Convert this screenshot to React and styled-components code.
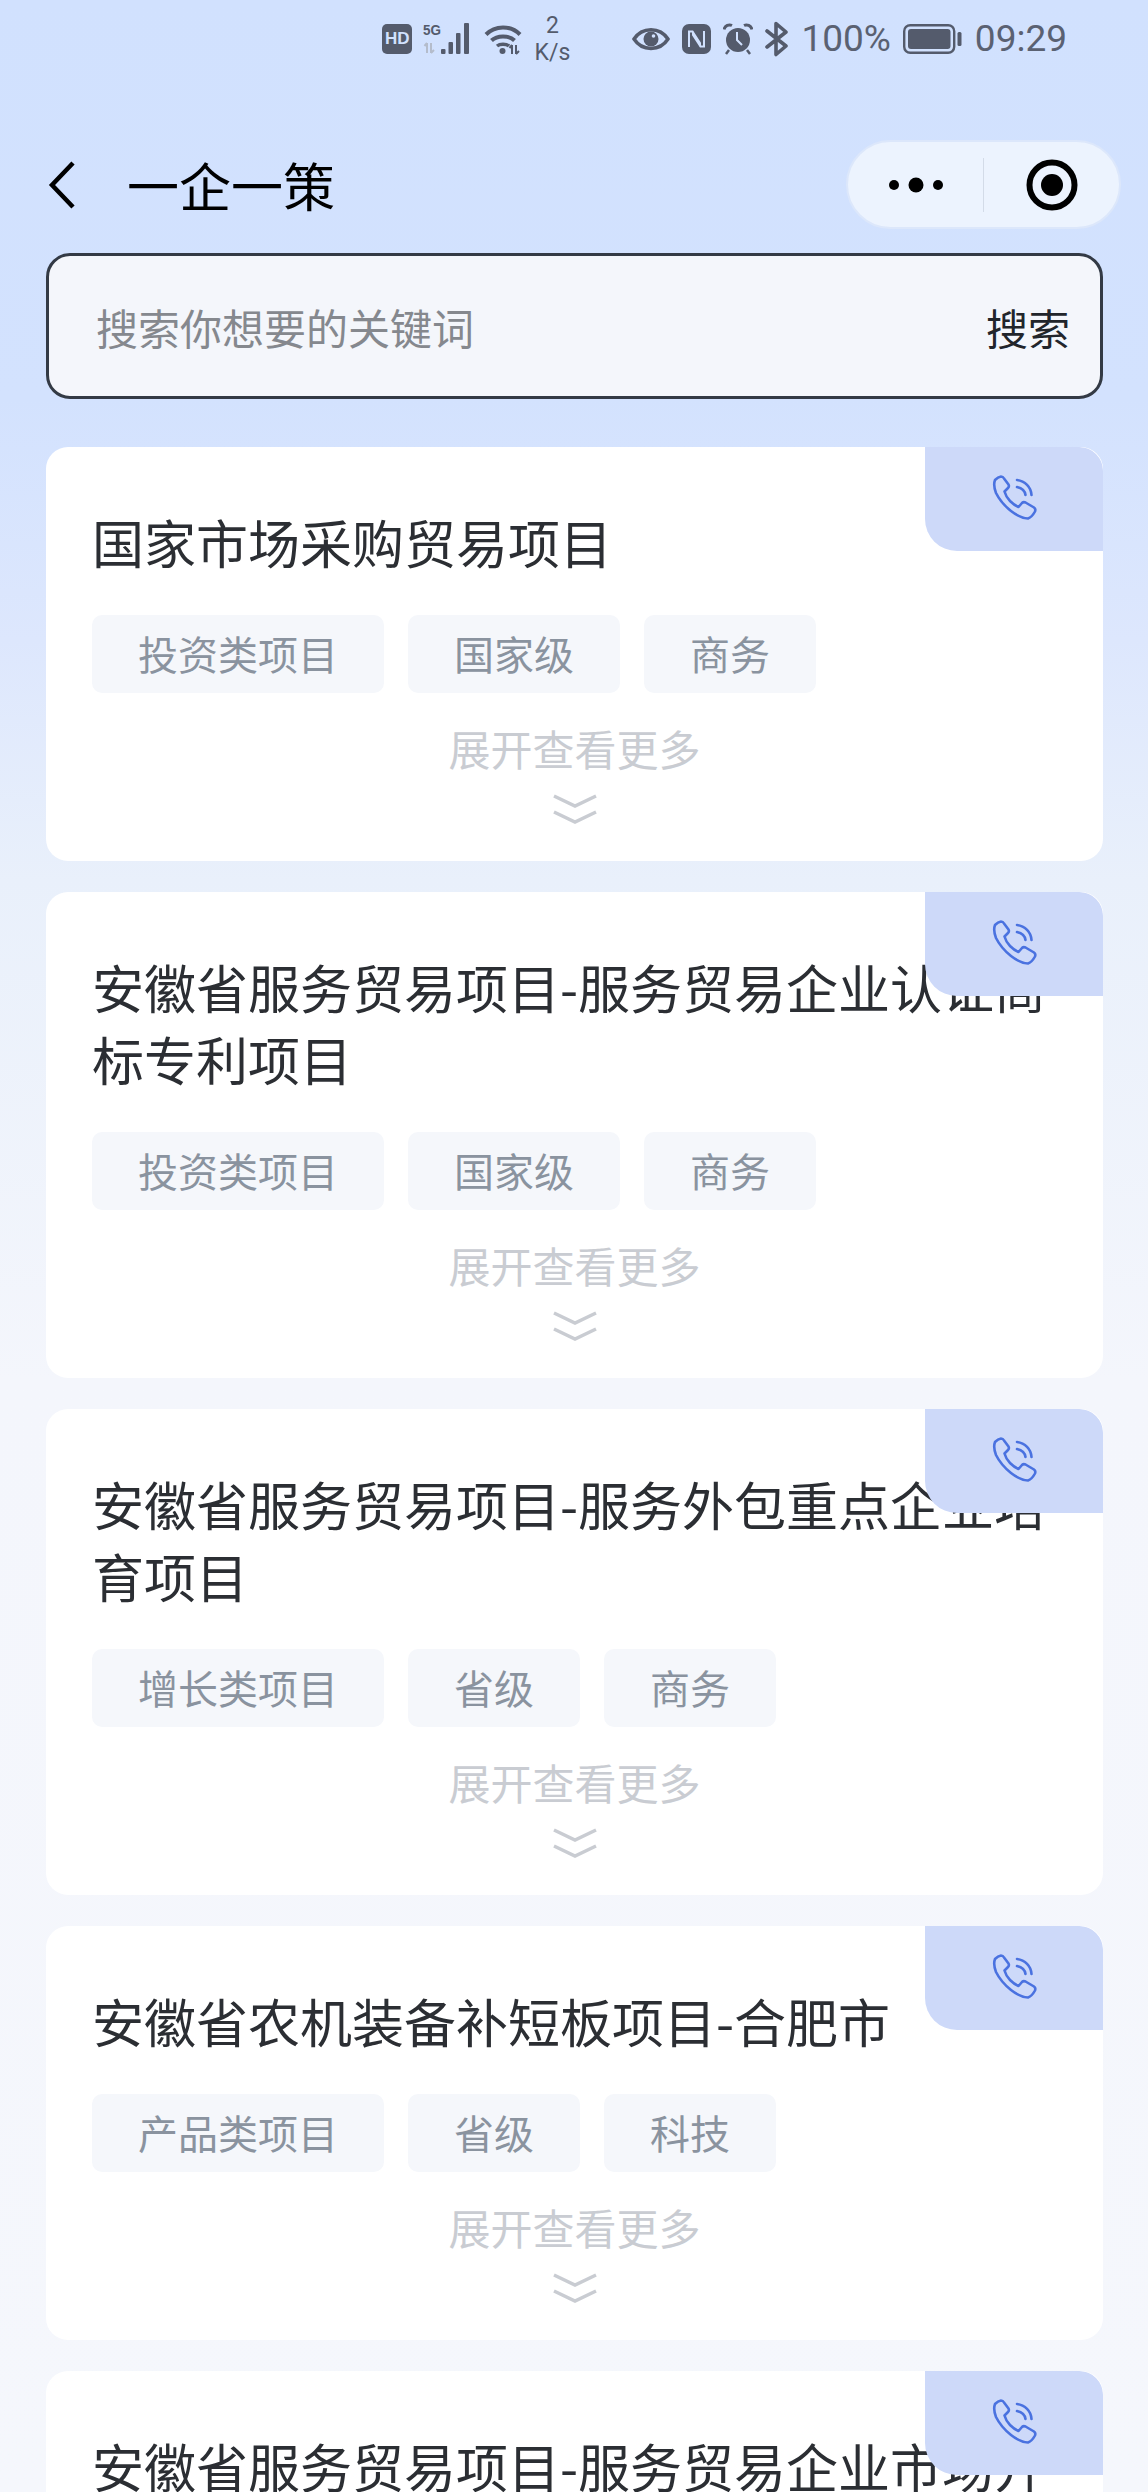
import styled, { createGlobalStyle } from "styled-components";

const GlobalStyle = createGlobalStyle`
  * { box-sizing: border-box; }
  html, body { margin: 0; padding: 0; }
  body { font-family: "Noto Sans CJK SC", "Noto Sans", sans-serif; }
`;

const Page = styled.div`
  width: 1148px;
  height: 2492px;
  overflow: hidden;
  background: linear-gradient(180deg, #d1e1fe 0, #d3e2fe 400px, #dde7fd 640px, #e9f0fb 880px, #f4f6fc 1380px, #f5f7fc 100%);
`;

const StatusBar = styled.div`
  height: 140px;
  padding: 16px 81px 0 0;
  display: flex;
  align-items: flex-start;
  justify-content: flex-end;
  color: #545b6c;
`;

const StatusRow = styled.div`
  height: 46px;
  display: flex;
  align-items: center;
  gap: ${(p) => p.$gap || 12}px;
  margin-right: ${(p) => p.$after || 0}px;
`;

const HdBadge = styled.span`
  width: 30px;
  height: 30px;
  border-radius: 5px;
  background: #545b6c;
  color: #d1e1fe;
  font: 700 17px/30px "Liberation Sans", sans-serif;
  text-align: center;
`;

const Speed = styled.div`
  width: 38px;
  text-align: center;
  font: 400 23px/27px Roboto, sans-serif;
  color: #545b6c;
`;

const StatusText = styled.span`
  font: 400 ${(p) => p.$size || 37}px/46px Roboto, sans-serif;
  color: #5a6172;
`;

const NavBar = styled.div`
  height: 89px;
  padding: 0 27px 0 48px;
  display: flex;
  align-items: center;
`;

const BackIcon = styled.svg`
  width: 28px;
  height: 50px;
`;

const NavTitle = styled.h1`
  margin: 0 0 0 51px;
  font-size: 52px;
  font-weight: 400;
  line-height: 72px;
  color: #000;
`;

const Capsule = styled.div`
  margin-left: auto;
  width: 275px;
  height: 89px;
  border-radius: 45px;
  border: 2px solid #dce7fb;
  background: #ecf3fe;
  display: flex;
  align-items: center;
`;

const CapsuleSide = styled.div`
  flex: 1;
  display: flex;
  align-items: center;
  justify-content: center;
`;

const CapsuleLine = styled.div`
  width: 1px;
  height: 54px;
  background: #d3dbe8;
`;

const Search = styled.div`
  margin: 24px 45px 48px 46px;
  height: 146px;
  padding: 0 30px 0 47px;
  border: 3px solid #333a45;
  border-radius: 24px;
  background: #f4f6fb;
  display: flex;
  align-items: center;
  justify-content: space-between;
  font-size: 42px;
`;

const Placeholder = styled.span`
  color: #85888e;
`;

const SearchAction = styled.span`
  color: #22252b;
`;

const List = styled.div`
  margin: 0 45px 0 46px;
  display: flex;
  flex-direction: column;
  gap: 31px;
`;

const Card = styled.div`
  position: relative;
  flex: none;
  padding: 59px 46px 37px;
  border-radius: 22px;
  background: #fff;
  overflow: hidden;
`;

const Title = styled.div`
  font-size: 52px;
  line-height: 72px;
  color: #2b2e33;
`;

const CallBadge = styled.div`
  position: absolute;
  top: 0;
  right: 0;
  width: 178px;
  height: 104px;
  border-radius: 0 24px 0 32px;
  background: #cdd9f9;
  display: flex;
  align-items: center;
  justify-content: center;
`;

const Tags = styled.div`
  margin-top: 37px;
  display: flex;
  gap: 24px;
`;

const Tag = styled.span`
  height: 78px;
  padding: 0 46px;
  border-radius: 10px;
  background: #f5f7fb;
  color: #8a939f;
  font-size: 40px;
  line-height: 76px;
`;

const More = styled.div`
  margin-top: 27px;
  text-align: center;
  color: #c9ccd2;
  font-size: 42px;
  line-height: 55px;
`;

const Chevrons = styled.svg`
  display: block;
  margin: 19px auto 0;
  width: 46px;
  height: 30px;
`;

const SignalIcon = () => (
  <svg width="50" height="34" viewBox="0 0 50 34">
    <text x="0" y="13" fontFamily="Liberation Sans" fontWeight="700" fontSize="14" fill="#545b6c" textLength="18" lengthAdjust="spacingAndGlyphs">5G</text>
    <path d="M4 31V21M1.5 24L4 21M8 21V31M8 31L11 28" stroke="#b4bccb" strokeWidth="2" fill="none" />
    <rect x="18" y="27" width="4.5" height="5" rx="1" fill="#545b6c" />
    <rect x="25.5" y="20" width="4.5" height="12" rx="1" fill="#545b6c" />
    <rect x="33" y="11" width="4.5" height="21" rx="1" fill="#545b6c" />
    <rect x="41" y="1" width="5" height="31" rx="1" fill="#545b6c" />
  </svg>
);

const WifiIcon = () => (
  <svg width="38" height="32" viewBox="0 0 38 32">
    <path d="M2 11.5C11 2 27 2 36 11.5" stroke="#545b6c" strokeWidth="4" fill="none" />
    <path d="M7.5 17.5C13 12 25 12 30.5 17.5" stroke="#545b6c" strokeWidth="4" fill="none" />
    <path d="M13 23C16 20.5 22 20.5 25 23" stroke="#545b6c" strokeWidth="3.5" fill="none" />
    <circle cx="18.5" cy="28" r="3" fill="#545b6c" />
    <path d="M28 31V22M25.5 25L28 22M32 22V31M32 31L35 28" stroke="#545b6c" strokeWidth="2" fill="none" />
  </svg>
);

const EyeIcon = () => (
  <svg width="38" height="24" viewBox="0 0 38 24">
    <path d="M2 12C10 -0.5 28 -0.5 36 12C28 24.5 10 24.5 2 12Z" stroke="#545b6c" strokeWidth="3.5" fill="none" />
    <circle cx="19" cy="12" r="7.5" fill="#545b6c" />
    <circle cx="21.5" cy="9" r="1.8" fill="#d1e1fe" />
  </svg>
);

const NfcIcon = () => (
  <svg width="29" height="30" viewBox="0 0 29 30">
    <rect width="29" height="30" rx="7" fill="#545b6c" />
    <path d="M7 23V7.5H10.5L18 19V22.5M22 7V22.5H18.5L11 11V7.5" stroke="#d1e1fe" strokeWidth="2" fill="none" />
  </svg>
);

const AlarmIcon = () => (
  <svg width="30" height="32" viewBox="0 0 30 32">
    <circle cx="15" cy="17" r="12" fill="#545b6c" />
    <path d="M1 6.5C2 2.5 6 1 9 2.5M29 6.5C28 2.5 24 1 21 2.5" stroke="#545b6c" strokeWidth="3" fill="none" />
    <path d="M6 27L3 31M24 27L27 31" stroke="#545b6c" strokeWidth="2.5" />
    <path d="M14 9V17L19 22" stroke="#d1e1fe" strokeWidth="2" fill="none" />
  </svg>
);

const BluetoothIcon = () => (
  <svg width="24" height="36" viewBox="0 0 24 36">
    <path d="M2 10L21 25L11 33.5V2.5L21 11L2 26" stroke="#545b6c" strokeWidth="3.6" fill="none" strokeLinejoin="round" strokeLinecap="round" />
  </svg>
);

const BatteryIcon = () => (
  <svg width="60" height="30" viewBox="0 0 60 30">
    <rect x="1.2" y="1.2" width="50" height="27.6" rx="6" stroke="#545b6c" strokeWidth="2.4" fill="none" />
    <rect x="5" y="5" width="42.5" height="20" rx="3" fill="#545b6c" />
    <rect x="54.5" y="8" width="4" height="14" rx="1.5" fill="#545b6c" />
  </svg>
);

const PhoneIcon = () => (
  <svg width="60" height="60" viewBox="0 0 60 60" fill="none" stroke="#4a72e0" strokeWidth="2.6" strokeLinejoin="round" strokeLinecap="round">
    <path d="M11 11Q14 8 17 7.5Q19 7.5 20 9.5L24.5 15.5Q25.5 17.5 24 19L20.5 22.5Q22 28 26 32Q30 36 34.5 38L38 34Q39.5 32.5 41.5 33.5L50 38.5Q52 40 51 42.5Q48 48 44 49.5Q36 49 27 42Q17 34 12 24Q9 16 11 11Z" />
    <path d="M33 11C41 12 47 18 47.5 26" />
    <path d="M33 18C37.5 19 41 22 41.5 26" />
  </svg>
);

const projects = [
  { title: "国家市场采购贸易项目", tags: ["投资类项目", "国家级", "商务"] },
  { title: "安徽省服务贸易项目-服务贸易企业认证商标专利项目", tags: ["投资类项目", "国家级", "商务"] },
  { title: "安徽省服务贸易项目-服务外包重点企业培育项目", tags: ["增长类项目", "省级", "商务"] },
  { title: "安徽省农机装备补短板项目-合肥市", tags: ["产品类项目", "省级", "科技"] },
  { title: "安徽省服务贸易项目-服务贸易企业市场开拓项目", tags: ["投资类项目", "国家级", "商务"] },
];

const App = () => {
  return (
    <Page>
      <GlobalStyle />
      <StatusBar>
        <StatusRow $gap={11} $after={61}>
          <HdBadge>HD</HdBadge>
          <SignalIcon />
          <WifiIcon />
          <Speed>2<br />K/s</Speed>
        </StatusRow>
        <StatusRow>
          <EyeIcon />
          <NfcIcon />
          <AlarmIcon />
          <BluetoothIcon />
          <StatusText>100%</StatusText>
          <BatteryIcon />
          <StatusText>09:29</StatusText>
        </StatusRow>
      </StatusBar>

      <NavBar>
        <BackIcon viewBox="0 0 28 50">
          <path d="M25 3L4 25L25 47" stroke="#000" strokeWidth="4.5" fill="none" />
        </BackIcon>
        <NavTitle>一企一策</NavTitle>
        <Capsule>
          <CapsuleSide>
            <svg width="60" height="16" viewBox="0 0 60 16">
              <circle cx="8" cy="8" r="5" fill="#000" />
              <circle cx="30" cy="8" r="7.5" fill="#000" />
              <circle cx="52" cy="8" r="5" fill="#000" />
            </svg>
          </CapsuleSide>
          <CapsuleLine />
          <CapsuleSide>
            <svg width="52" height="52" viewBox="0 0 52 52">
              <circle cx="26" cy="26" r="22.5" stroke="#000" strokeWidth="6" fill="none" />
              <circle cx="26" cy="26" r="11" fill="#000" />
            </svg>
          </CapsuleSide>
        </Capsule>
      </NavBar>

      <Search>
        <Placeholder>搜索你想要的关键词</Placeholder>
        <SearchAction>搜索</SearchAction>
      </Search>

      <List>
        {projects.map((item) => (
          <Card key={item.title}>
            <Title>{item.title}</Title>
            <CallBadge>
              <PhoneIcon />
            </CallBadge>
            <Tags>
              {item.tags.map((tag) => (
                <Tag key={tag}>{tag}</Tag>
              ))}
            </Tags>
            <More>展开查看更多</More>
            <Chevrons viewBox="0 0 46 30">
              <path d="M2 2L23 12L44 2M2 18L23 28L44 18" stroke="#c9ccd2" strokeWidth="3.5" fill="none" />
            </Chevrons>
          </Card>
        ))}
      </List>
    </Page>
  );
};

export default App;
